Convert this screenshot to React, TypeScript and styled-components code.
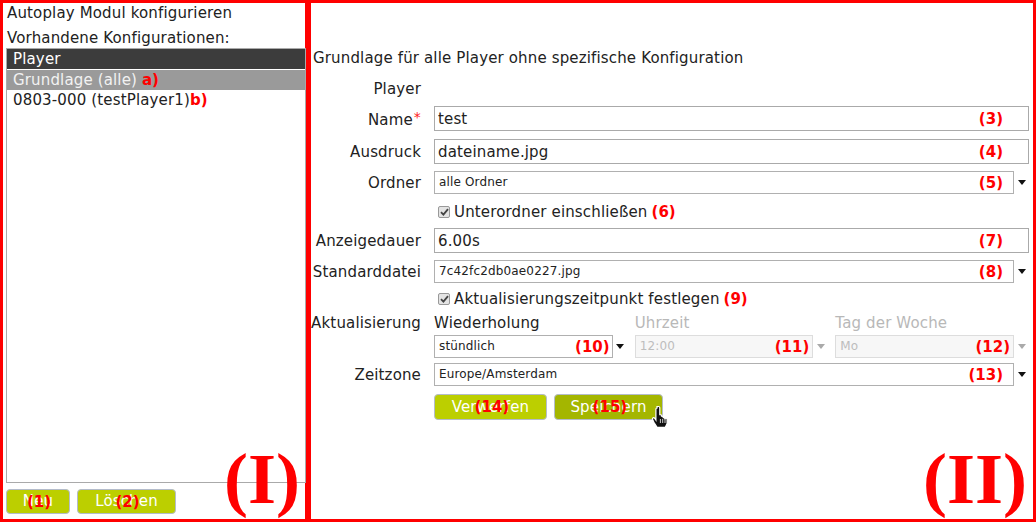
import React from "react";
import styled, { createGlobalStyle } from "styled-components";

const GlobalStyle = createGlobalStyle`
  html, body {
    margin: 0;
    padding: 0;
    background: #fff;
  }
  body {
    font-family: "DejaVu Sans", Verdana, sans-serif;
    font-size: 15px;
    letter-spacing: 0.15px;
    color: #222;
  }
  * {
    box-sizing: border-box;
  }
`;

const Page = styled.div`
  display: flex;
  width: 1036px;
  height: 522px;
`;

const Panel = styled.div<{ $width?: number }>`
  position: relative;
  display: flex;
  flex-direction: column;
  border: 3px solid #ff0000;
  ${(p) => (p.$width ? `width: ${p.$width}px;` : "flex: 1;")}
`;

const BigMark = styled.span<{ $right: number }>`
  position: absolute;
  right: ${(p) => p.$right}px;
  bottom: 4px;
  font-family: "Liberation Serif", "Times New Roman", serif;
  font-weight: bold;
  font-size: 72px;
  line-height: 72px;
  letter-spacing: 0;
  color: #ff0000;
`;

const Mark = styled.span`
  color: #ff0000;
  font-weight: bold;
  font-size: 15px;
  letter-spacing: 0;
`;

/* left panel */

const Title = styled.div<{ $mt?: number }>`
  padding: 0 4px;
  line-height: 20px;
  margin-top: ${(p) => p.$mt ?? 0}px;
  white-space: nowrap;
`;

const Heading = styled.div`
  line-height: 20px;
  white-space: nowrap;
`;

const ListBox = styled.div`
  flex: 1;
  margin: 0 -1px 0 3px;
  border: 1px solid #aaa;
  background: #fff;
`;

const ListHeader = styled.div`
  height: 20px;
  line-height: 20px;
  padding-left: 6px;
  background: #3c3c3c;
  color: #fff;
  margin-bottom: 1px;
`;

const ListItem = styled.div<{ $selected?: boolean }>`
  height: 20px;
  line-height: 20px;
  padding-left: 6px;
  background: ${(p) => (p.$selected ? "#9a9a9a" : "transparent")};
  color: ${(p) => (p.$selected ? "#f2f2f2" : "#222")};
  white-space: nowrap;
`;

const ButtonRow = styled.div<{ $mt: number; $mb?: number; $pl?: number }>`
  display: flex;
  gap: 7px;
  margin-top: ${(p) => p.$mt}px;
  margin-bottom: ${(p) => p.$mb ?? 0}px;
  padding-left: ${(p) => p.$pl ?? 0}px;
`;

const Button = styled.div<{ $width: number; $height: number; $hover?: boolean }>`
  position: relative;
  width: ${(p) => p.$width}px;
  height: ${(p) => p.$height}px;
  border: 1px solid #b4bccb;
  border-radius: 4px;
  background: ${(p) => (p.$hover ? "#a4b600" : "#bccf00")};
  color: #fff;
  display: flex;
  align-items: center;
  justify-content: center;
  line-height: 1;
`;

const ButtonMark = styled(Mark)`
  position: absolute;
  left: 50%;
  top: 50%;
  transform: translate(-46%, -46%);
`;

const Cursor = styled.svg`
  position: absolute;
  left: 96px;
  top: 10px;
`;

/* right panel */

const Content = styled.div`
  padding: 45px 4px 0 2px;
`;

const Row = styled.div<{ $mt: number; $top?: boolean }>`
  display: grid;
  grid-template-columns: 108px 1fr;
  column-gap: 13px;
  align-items: ${(p) => (p.$top ? "start" : "center")};
  margin-top: ${(p) => p.$mt}px;
`;

const Label = styled.div<{ $lh?: number }>`
  justify-self: end;
  white-space: nowrap;
  line-height: ${(p) => p.$lh ?? 20}px;
`;

const Star = styled.span`
  color: #ff2020;
  font-size: 14px;
  vertical-align: 3px;
  margin-left: 1px;
`;

const Field = styled.div`
  position: relative;
  display: flex;
  align-items: center;
`;

const FieldMark = styled(Mark)<{ $right: number }>`
  position: absolute;
  right: ${(p) => p.$right}px;
  top: 50%;
  transform: translateY(-50%);
`;

const TextInput = styled.input`
  width: 100%;
  height: 25px;
  border: 1px solid #aaa;
  padding: 0 3px;
  font-family: "DejaVu Sans", Verdana, sans-serif;
  font-size: 15px;
  letter-spacing: 0.15px;
  color: #222;
  background: #fff;
  outline: none;
`;

const SelectBox = styled.div<{ $disabled?: boolean }>`
  flex: 1;
  height: 23px;
  line-height: 21px;
  border: 1px solid ${(p) => (p.$disabled ? "#ddd" : "#b0b0b0")};
  background: ${(p) => (p.$disabled ? "#f7f7f7" : "#fff")};
  color: ${(p) => (p.$disabled ? "#bdbdbd" : "#222")};
  font-size: 12px;
  padding-left: 4px;
  white-space: nowrap;
`;

const Arrow = styled.div<{ $disabled?: boolean }>`
  width: 15px;
  display: flex;
  justify-content: center;
  &::after {
    content: "";
    border-left: 4.5px solid transparent;
    border-right: 4.5px solid transparent;
    border-top: 5px solid ${(p) => (p.$disabled ? "#aaa" : "#111")};
  }
`;

const CheckRow = styled.div`
  display: flex;
  align-items: center;
  gap: 4px;
  padding-left: 4px;
  line-height: 20px;
  white-space: nowrap;
`;

const CheckBox = styled.span`
  width: 12px;
  height: 12px;
  border: 1px solid #999;
  border-radius: 2px;
  background: #e4e4e4;
  display: flex;
  align-items: center;
  justify-content: center;
`;

const Columns = styled.div`
  display: grid;
  grid-template-columns: repeat(3, 1fr);
  column-gap: 7px;
`;

const Column = styled.div`
  display: flex;
  flex-direction: column;
`;

const SubLabel = styled.div<{ $muted?: boolean }>`
  height: 17px;
  line-height: 17px;
  margin-bottom: 3px;
  color: ${(p) => (p.$muted ? "#b8b8b8" : "#222")};
  white-space: nowrap;
`;

const Check = () => (
  <CheckBox>
    <svg width="9" height="8" viewBox="0 0 9 8">
      <path d="M1 4.2 L3.4 6.6 L8 1.2" fill="none" stroke="#444" strokeWidth="1.8" />
    </svg>
  </CheckBox>
);

type SelectProps = { value: string; mark: string; disabled?: boolean; markRight?: number };

const Select: React.FC<SelectProps> = ({ value, mark, disabled, markRight = 26 }) => (
  <Field>
    <SelectBox $disabled={disabled}>{value}</SelectBox>
    <Arrow $disabled={disabled} />
    <FieldMark $right={markRight}>{mark}</FieldMark>
  </Field>
);

const Input: React.FC<{ value: string; mark: string }> = ({ value, mark }) => (
  <Field>
    <TextInput readOnly value={value} />
    <FieldMark $right={26}>{mark}</FieldMark>
  </Field>
);

const App: React.FC = () => {
  return (
    <>
      <GlobalStyle />
      <Page>
        <Panel $width={308}>
          <Title>Autoplay Modul konfigurieren</Title>
          <Title $mt={5}>Vorhandene Konfigurationen:</Title>
          <ListBox>
            <ListHeader>Player</ListHeader>
            <ListItem $selected>
              Grundlage (alle) <Mark>a)</Mark>
            </ListItem>
            <ListItem>
              0803-000 (testPlayer1)<Mark>b)</Mark>
            </ListItem>
          </ListBox>
          <ButtonRow $mt={6} $mb={5} $pl={3}>
            <Button $width={64} $height={25}>
              Neu
              <ButtonMark>(1)</ButtonMark>
            </Button>
            <Button $width={99} $height={25}>
              Löschen
              <ButtonMark>(2)</ButtonMark>
            </Button>
          </ButtonRow>
          <BigMark $right={5}>(I)</BigMark>
        </Panel>

        <Panel>
          <Content>
            <Heading>Grundlage für alle Player ohne spezifische Konfiguration</Heading>

            <Row $mt={11}>
              <Label>Player</Label>
              <div />
            </Row>
            <Row $mt={7}>
              <Label>
                Name<Star>*</Star>
              </Label>
              <Input value="test" mark="(3)" />
            </Row>
            <Row $mt={8}>
              <Label>Ausdruck</Label>
              <Input value="dateiname.jpg" mark="(4)" />
            </Row>
            <Row $mt={7}>
              <Label>Ordner</Label>
              <Select value="alle Ordner" mark="(5)" />
            </Row>
            <Row $mt={8}>
              <div />
              <CheckRow>
                <Check />
                Unterordner einschließen <Mark>(6)</Mark>
              </CheckRow>
            </Row>
            <Row $mt={6}>
              <Label>Anzeigedauer</Label>
              <Input value="6.00s" mark="(7)" />
            </Row>
            <Row $mt={7}>
              <Label>Standarddatei</Label>
              <Select value="7c42fc2db0ae0227.jpg" mark="(8)" />
            </Row>
            <Row $mt={6}>
              <div />
              <CheckRow>
                <Check />
                Aktualisierungszeitpunkt festlegen <Mark>(9)</Mark>
              </CheckRow>
            </Row>
            <Row $mt={6} $top>
              <Label $lh={17}>Aktualisierung</Label>
              <Columns>
                <Column>
                  <SubLabel>Wiederholung</SubLabel>
                  <Select value="stündlich" mark="(10)" markRight={18} />
                </Column>
                <Column>
                  <SubLabel $muted>Uhrzeit</SubLabel>
                  <Select value="12:00" mark="(11)" markRight={19} disabled />
                </Column>
                <Column>
                  <SubLabel $muted>Tag der Woche</SubLabel>
                  <Select value="Mo" mark="(12)" markRight={19} disabled />
                </Column>
              </Columns>
            </Row>
            <Row $mt={5}>
              <Label>Zeitzone</Label>
              <Select value="Europe/Amsterdam" mark="(13)" />
            </Row>
            <Row $mt={8}>
              <div />
              <ButtonRow $mt={0}>
                <Button $width={113} $height={26}>
                  Verwerfen
                  <ButtonMark>(14)</ButtonMark>
                </Button>
                <Button $width={109} $height={26} $hover>
                  Speichern
                  <ButtonMark>(15)</ButtonMark>
                  <Cursor width="20" height="24" viewBox="0 0 20 24">
                    <path
                      d="M6 1.5 h1.6 a1.2 1.2 0 0 1 1.2 1.2 v7 h0.6 a1.1 1.1 0 0 1 1.1 1.1 v0.4 h0.6 a1.1 1.1 0 0 1 1.1 1.1 v0.4 h0.6 a1.1 1.1 0 0 1 1.1 1.1 v0.4 a1.1 1.1 0 0 1 2.2 0 v4.3 l-1.8 3.8 h-8.2 l-3.2 -5 l-1.4 -3 a1.2 1.2 0 0 1 2.1 -1.1 l1.3 1.9 v-10.9 a1.2 1.2 0 0 1 1.2 -1.2 z"
                      fill="#111"
                      stroke="#fff"
                      strokeWidth="1.2"
                    />
                    <path d="M9.4 14 v4 M11.7 14 v4 M14 14 v4" stroke="#fff" strokeWidth="0.8" />
                  </Cursor>
                </Button>
              </ButtonRow>
            </Row>
          </Content>
          <BigMark $right={6}>(II)</BigMark>
        </Panel>
      </Page>
    </>
  );
};

export default App;
